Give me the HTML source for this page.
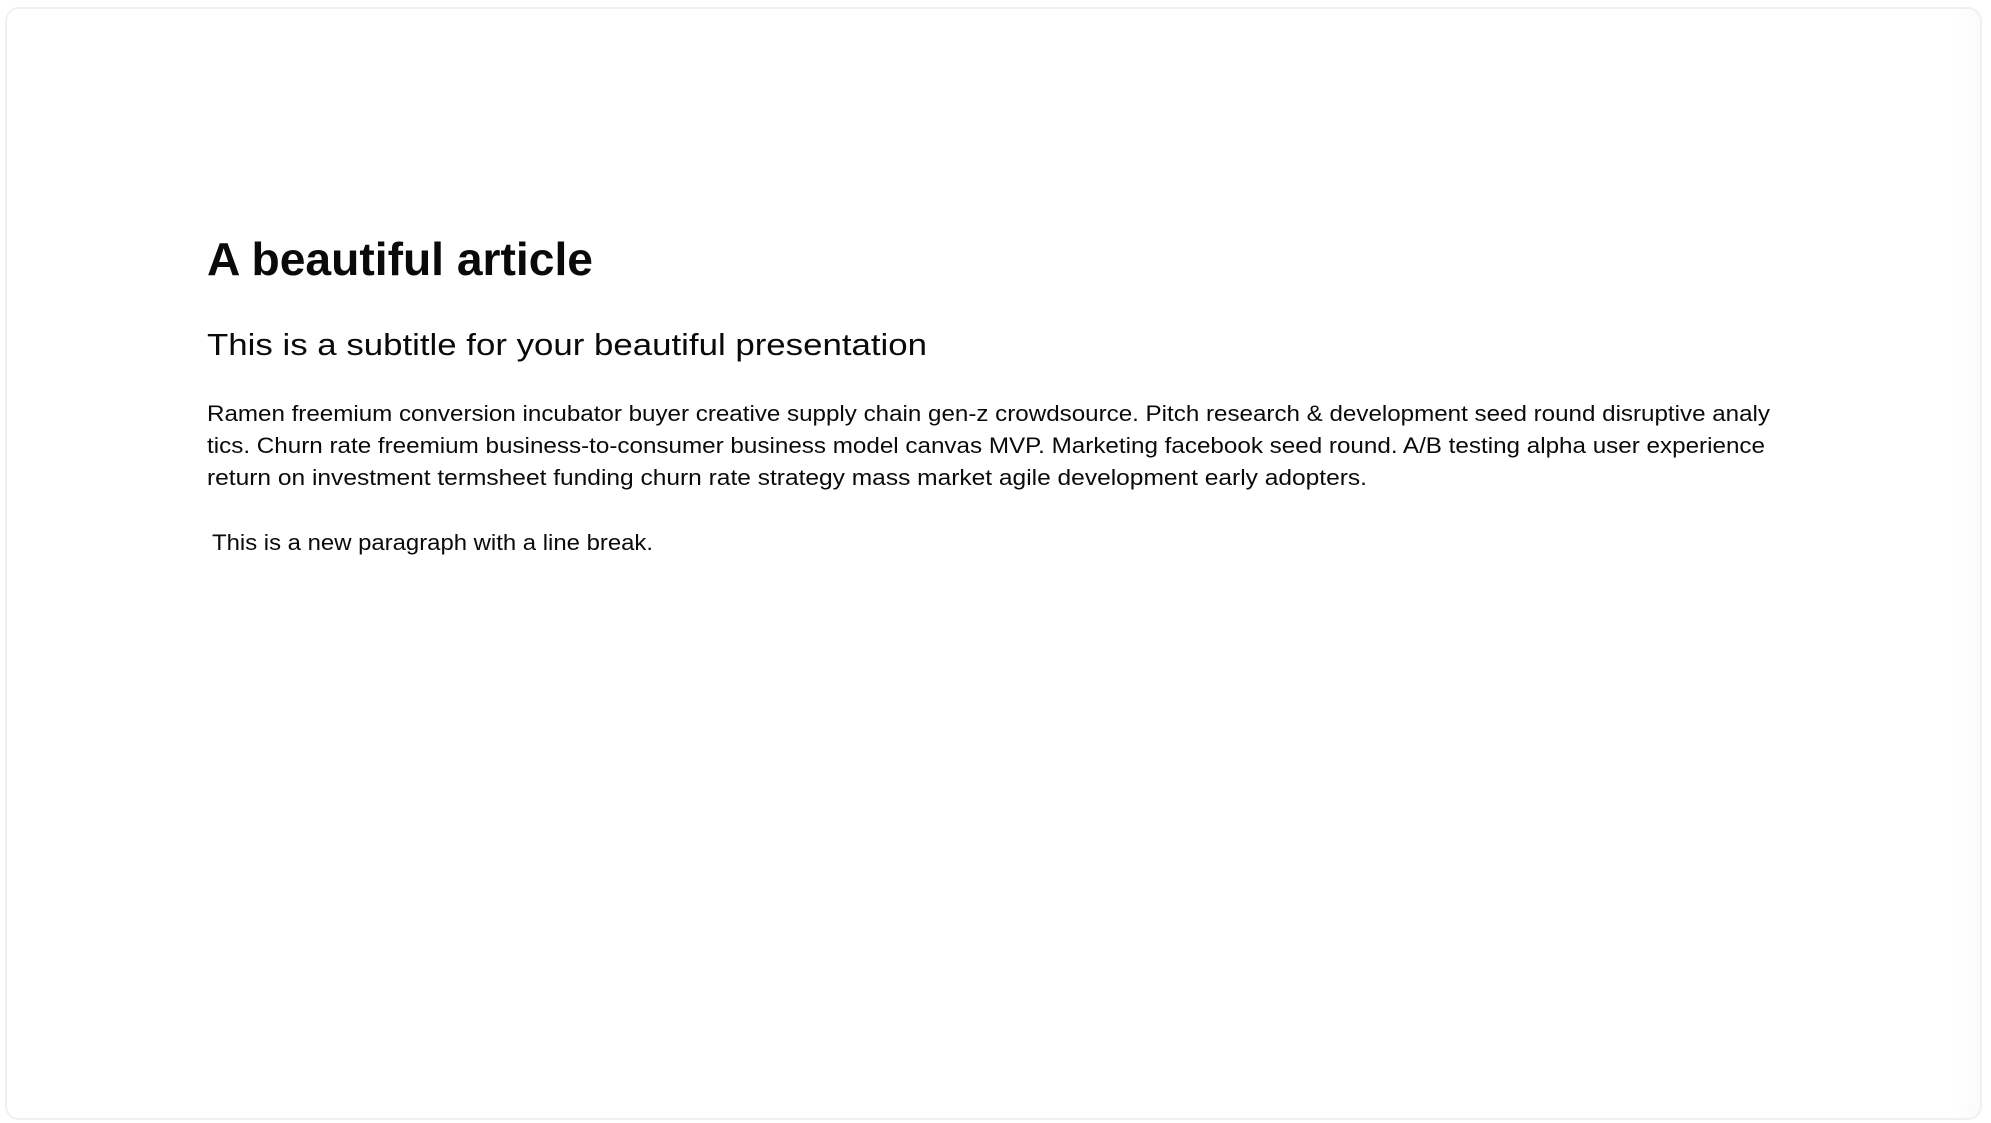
<!DOCTYPE html>
<html><head><meta charset="utf-8"><style>
html,body{margin:0;padding:0;background:#fff;width:1991px;height:1123px;overflow:hidden}
.card{position:absolute;left:5px;top:7px;width:1973px;height:1109px;border:2px solid #f0f0f2;border-radius:14px;box-shadow:inset -40px 0 40px -40px rgba(0,0,0,0.04);background:#fff}
svg{position:absolute;left:0;top:0}
text{font-family:"Liberation Sans",sans-serif;fill:#0a0a0a}
</style></head><body>
<div class="card"></div>
<svg width="1991" height="1123">
<text x="207" y="275" font-size="46" font-weight="bold" textLength="386" lengthAdjust="spacingAndGlyphs">A beautiful article</text>
<text x="207" y="355" font-size="31" textLength="720" lengthAdjust="spacingAndGlyphs">This is a subtitle for your beautiful presentation</text>
<text x="207" y="421" font-size="22" textLength="1563" lengthAdjust="spacingAndGlyphs">Ramen freemium conversion incubator buyer creative supply chain gen-z crowdsource. Pitch research &amp; development seed round disruptive analy</text>
<text x="207" y="453" font-size="22" textLength="1558" lengthAdjust="spacingAndGlyphs">tics. Churn rate freemium business-to-consumer business model canvas MVP. Marketing facebook seed round. A/B testing alpha user experience</text>
<text x="207" y="485" font-size="22" textLength="1160" lengthAdjust="spacingAndGlyphs">return on investment termsheet funding churn rate strategy mass market agile development early adopters.</text>
<text x="212" y="550" font-size="22" textLength="441" lengthAdjust="spacingAndGlyphs">This is a new paragraph with a line break.</text>
</svg>
</body></html>
